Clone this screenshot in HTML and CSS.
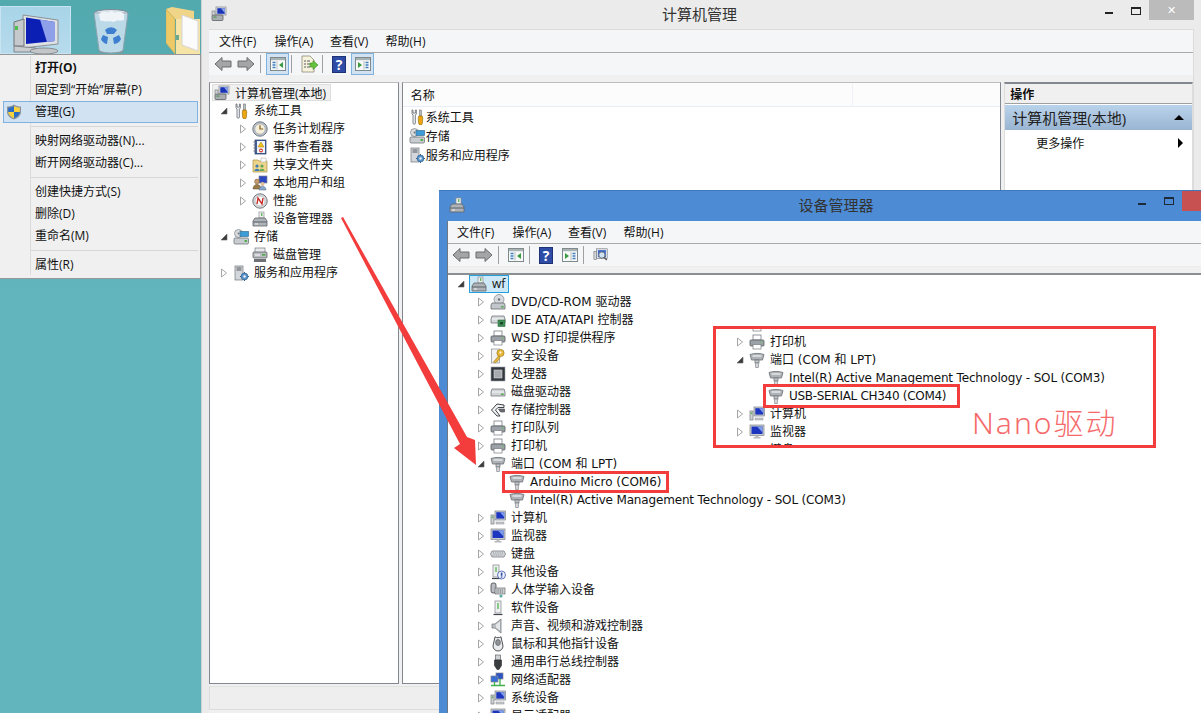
FILE: index.html
```html
<!DOCTYPE html>
<html>
<head>
  <title>计算机管理</title>
  <link rel="stylesheet" href="styles.css">
</head>
<body>
<svg class="defs" width="0" height="0">
  <defs>
    <symbol id="exp-closed" viewBox="0 0 8 10"><path d="M1.5 1 L6.5 5 L1.5 9 Z" fill="#fff" stroke="#a6a6a6"/></symbol>
    <symbol id="exp-open" viewBox="0 0 8 10"><path d="M7 2 V8 H1 Z" fill="#3c3c3c" stroke="#666" stroke-width=".6"/></symbol>

    <symbol id="i-mgmt" viewBox="0 0 16 16"><rect x="5" y="1" width="10" height="8" fill="#dfe3e8" stroke="#8b8f95" stroke-width=".8"/><rect x="6.3" y="2.2" width="7.6" height="5.6" fill="#1a34b8"/><path d="M10 2.2h3.9v5z" fill="#8fa8ea"/><rect x="1" y="9" width="11" height="5.5" rx="1" fill="#a9adb2" stroke="#5d6268" stroke-width=".8"/><rect x="2.5" y="10.5" width="3" height="1.2" fill="#4c9a4c"/><rect x="1" y="5" width="3" height="4" fill="#cfd3d6" stroke="#777" stroke-width=".6"/></symbol>
    <symbol id="i-tools" viewBox="0 0 16 16"><path d="M3 1 v4 l1 1 v8 a1.2 1.2 0 0 0 2.4 0 v-8 l1-1 v-4 l-1 0 v3 h-2.4 v-3 z" fill="#eceff2" stroke="#686d73" stroke-width=".8"/><rect x="10.6" y="1" width="1.8" height="6" fill="#b9bdc2" stroke="#5e6267" stroke-width=".5"/><path d="M9.8 7 h3.4 l.6 2 -.4 5 a1.4 1.4 0 0 1 -3.8 0 l-.4-5z" fill="#eba70e" stroke="#93660b" stroke-width=".6"/></symbol>
    <symbol id="i-clock" viewBox="0 0 16 16"><circle cx="8" cy="8" r="7.2" fill="#bcc3cc" stroke="#6f7882"/><circle cx="8" cy="8" r="5.2" fill="#f4f0dc" stroke="#98a0a8" stroke-width=".6"/><path d="M8 4.2 V8 H11.2" fill="none" stroke="#8a5a1c" stroke-width="1.2"/></symbol>
    <symbol id="i-event" viewBox="0 0 16 16"><rect x="3" y="1" width="11" height="14" fill="#3f5c9c" stroke="#2b3f70" stroke-width=".7"/><rect x="5" y="2" width="8" height="12" fill="#f2f3f5"/><path d="M1.5 3h3M1.5 6h3M1.5 9h3M1.5 12h3" stroke="#6a6f75"/><path d="M9 3 L12 8 H6z" fill="#f3c31c" stroke="#a27f0c" stroke-width=".5"/><circle cx="9" cy="11.5" r="2" fill="#d2433c"/><rect x="8" y="11" width="2" height="1" fill="#fff"/></symbol>
    <symbol id="i-share" viewBox="0 0 16 16"><path d="M1 3h5l1 1h8v11H1z" fill="#ecd48a" stroke="#a98f45" stroke-width=".7"/><rect x="9" y="1" width="5" height="4" fill="#fafafa" stroke="#aaa" stroke-width=".5"/><circle cx="5" cy="9" r="1.6" fill="#3b7db4"/><path d="M2.5 14c0-3 5-3 5 0z" fill="#3b7db4"/><circle cx="10" cy="9" r="1.6" fill="#5fa85a"/><path d="M7.5 14c0-3 5-3 5 0z" fill="#5fa85a"/></symbol>
    <symbol id="i-users" viewBox="0 0 16 16"><rect x="7" y="1" width="8" height="7" fill="#2c49c2" stroke="#80858c" stroke-width=".7"/><circle cx="5" cy="6.5" r="2.4" fill="#c69a6c" stroke="#7b5c3a" stroke-width=".5"/><path d="M1 14c0-6 8-6 8 0z" fill="#9a7b46" stroke="#5d4a28" stroke-width=".5"/><circle cx="10.5" cy="9" r="2" fill="#e0c09a"/><path d="M7 15c0-5 7-5 7 0z" fill="#8aa7c9" stroke="#55708f" stroke-width=".5"/></symbol>
    <symbol id="i-perf" viewBox="0 0 16 16"><circle cx="8" cy="8" r="7.2" fill="#d8dadc" stroke="#73777c"/><circle cx="8" cy="8" r="5" fill="#fbfbf7" stroke="#a4a8ac" stroke-width=".6"/><path d="M5 11 L6 5 L10 11 L11 5" fill="none" stroke="#c92c2c" stroke-width="1.4"/></symbol>
    <symbol id="i-dev" viewBox="0 0 16 16"><rect x="7" y="1" width="5" height="6" fill="#eef0ef" stroke="#8d9194" stroke-width=".7"/><rect x="9" y="2" width="1.4" height="3" fill="#66b866"/><path d="M3 7h10l2 3v5H1v-5z" fill="#aeb3b8" stroke="#60656b" stroke-width=".8"/><path d="M1 11h14" stroke="#5d6268"/><rect x="3" y="12.5" width="3" height="1" fill="#eee"/></symbol>
    <symbol id="i-storage" viewBox="0 0 16 16"><circle cx="5.5" cy="4.5" r="4" fill="#d9dcdf" stroke="#7d8287" stroke-width=".7"/><circle cx="5.5" cy="4.5" r="1" fill="#777"/><rect x="7" y="2.5" width="8.5" height="5" fill="#3d9bd6" stroke="#3c6f93" stroke-width=".7"/><rect x="1" y="9" width="14.5" height="6" rx="1.2" fill="#c9cdd1" stroke="#6e7378" stroke-width=".8"/><rect x="11.5" y="11" width="2.6" height="2" fill="#55b04f"/></symbol>
    <symbol id="i-disk" viewBox="0 0 16 16"><rect x="3" y="1" width="10" height="5" fill="#e8eaec" stroke="#75797e" stroke-width=".7"/><rect x="1" y="5" width="14" height="6" rx="1" fill="#b9bdc2" stroke="#5c6066" stroke-width=".8"/><rect x="10" y="7" width="3.4" height="1.6" fill="#4ea94b"/><rect x="2" y="12" width="12" height="3" fill="#6d7176"/><path d="M3 8h5" stroke="#fff"/></symbol>
    <symbol id="i-svc" viewBox="0 0 16 16"><rect x="2" y="1" width="8" height="14" fill="#d3d7dc" stroke="#70757b" stroke-width=".7"/><path d="M3.5 3h5M3.5 5h5" stroke="#55595e"/><circle cx="11.5" cy="11.5" r="3.4" fill="#5d94c8" stroke="#2e5f8e" stroke-width=".7"/><circle cx="11.5" cy="11.5" r="1.2" fill="#e6eef6"/><path d="M11.5 7v1.2M11.5 14.8v1.2M7 11.5h1.2M14.8 11.5H16" stroke="#2e5f8e"/></symbol>
    <symbol id="i-dvd" viewBox="0 0 16 16"><circle cx="9" cy="5.5" r="5" fill="#d8dbde" stroke="#7d8287" stroke-width=".7"/><circle cx="9" cy="5.5" r="1.2" fill="#6d7176"/><path d="M2 9h12l1 2v4H1v-4z" fill="#c3c7cb" stroke="#676b70" stroke-width=".8"/><rect x="11" y="12" width="2.6" height="1.5" fill="#4ea94b"/></symbol>
    <symbol id="i-ide" viewBox="0 0 16 16"><path d="M2 4h12l1 3v4H1V7z" fill="#d5d8db" stroke="#72777c" stroke-width=".8"/><path d="M2 7h12" stroke="#f7f7f7"/><rect x="8" y="8" width="7" height="6.5" fill="#3f8f56" stroke="#2c6a3e" stroke-width=".6"/><rect x="10" y="10" width="3" height="2.5" fill="#1e4a2c"/></symbol>
    <symbol id="i-printer" viewBox="0 0 16 16"><rect x="4" y="1" width="8" height="5" fill="#fff" stroke="#777c82" stroke-width=".8"/><rect x="1" y="6" width="14" height="6" rx="1" fill="#9da2a8" stroke="#565a5f" stroke-width=".8"/><rect x="4" y="10.5" width="8" height="4.5" fill="#fff" stroke="#777c82" stroke-width=".7"/><rect x="11.5" y="7.5" width="2" height="1" fill="#5ec25a"/></symbol>
    <symbol id="i-key" viewBox="0 0 16 16"><rect x="1.5" y="1" width="8" height="14" fill="#f1f2f3" stroke="#8a8e93" stroke-width=".7"/><circle cx="10.5" cy="5" r="3.6" fill="#eab93b" stroke="#9c7a1a" stroke-width=".7"/><circle cx="10.5" cy="4.5" r="1" fill="#fff"/><path d="M8.5 8 L3.5 14 L5 15 L6 13.6 L7 14 L10 9.5z" fill="#eab93b" stroke="#9c7a1a" stroke-width=".6"/></symbol>
    <symbol id="i-cpu" viewBox="0 0 16 16"><rect x="1" y="1" width="14" height="14" fill="#32383e" stroke="#9aa0a6" stroke-width=".6"/><rect x="4" y="4" width="8" height="8" fill="#a7abaf" stroke="#d8dadc" stroke-width=".6"/></symbol>
    <symbol id="i-hdd" viewBox="0 0 16 16"><path d="M2 5h12l1 3v4H1V8z" fill="#d1d4d7" stroke="#71767b" stroke-width=".8"/><path d="M2 8h12" stroke="#f5f5f5"/><rect x="11" y="9.5" width="2.6" height="1.5" fill="#4ea94b"/></symbol>
    <symbol id="i-stor" viewBox="0 0 16 16"><path d="M7 2 L1.5 8 L7 14 H10 L5.5 8 L8 5.5 H14 V3 Z" fill="#f0f1f2" stroke="#3f4347"/><path d="M8.5 7 h6 v3 h-4 z" fill="#6a6e73" stroke="#3f4347" stroke-width=".6"/></symbol>
    <symbol id="i-port" viewBox="0 0 16 16"><path d="M1 2.5 C5 1 11 1 15 2.5 L13.5 8 H2.5 Z" fill="#aeb2b6" stroke="#6b7075" stroke-width=".8"/><path d="M3.5 4h9" stroke="#e9ebec" stroke-width="1.4"/><rect x="6" y="8" width="4" height="3" fill="#c5c8cb" stroke="#6b7075" stroke-width=".7"/><rect x="6.7" y="11" width="2.6" height="4.5" fill="#d8dadc" stroke="#80848a" stroke-width=".7"/></symbol>
    <symbol id="i-pc" viewBox="0 0 16 16"><rect x="5" y="1" width="10.5" height="9" fill="#c9cdd1" stroke="#7f8388" stroke-width=".7"/><rect x="6.3" y="2.2" width="8" height="6.4" fill="#1c36c0"/><path d="M10 2.2h4.3v5z" fill="#7f9ce8"/><rect x="1" y="5" width="3" height="9" fill="#cfd3d6" stroke="#74787d" stroke-width=".7"/><rect x="1.8" y="6.5" width="1.4" height="1.6" fill="#57b04f"/><rect x="6" y="12" width="8" height="2" fill="#c9cdd1" stroke="#8a8e93" stroke-width=".5"/></symbol>
    <symbol id="i-mon" viewBox="0 0 16 16"><rect x="1" y="1" width="14" height="10.5" fill="#c9cdd1" stroke="#7f8388" stroke-width=".7"/><rect x="2.5" y="2.5" width="11" height="7.5" fill="#1c36c0"/><path d="M8 2.5h5.5v6z" fill="#7f9ce8"/><path d="M6.5 11.5h3v1.5h2v1.5h-7V13h2z" fill="#b6babe"/></symbol>
    <symbol id="i-kbd" viewBox="0 0 16 16"><path d="M2 5h12l1.5 3-1.5 3H2L.5 8z" fill="#d6d9dc" stroke="#777c81" stroke-width=".8"/><path d="M3 7h10M2.5 9h11" stroke="#8e9398" stroke-dasharray="1 .8"/></symbol>
    <symbol id="i-other" viewBox="0 0 16 16"><rect x="3" y="1" width="6" height="12" fill="#eef0f1" stroke="#7e8287" stroke-width=".7"/><rect x="5.2" y="3" width="1.6" height="5" fill="#6fc06a"/><path d="M2 14.5h9" stroke="#3f4347" stroke-width="1.2"/><circle cx="11.5" cy="11" r="4" fill="#eef2fa" stroke="#3c57a8" stroke-width=".8"/><rect x="10.8" y="8.6" width="1.6" height="3.2" fill="#2f4aa5"/><rect x="10.8" y="12.4" width="1.6" height="1.2" fill="#2f4aa5"/></symbol>
    <symbol id="i-hid" viewBox="0 0 16 16"><rect x="1" y="1" width="5" height="10" rx="2" fill="#b9bdc1" stroke="#43474b" stroke-width=".8"/><rect x="5" y="6" width="10" height="6" fill="#ced1d4" stroke="#666a6f" stroke-width=".7"/><path d="M6.5 8h7M6.5 10h7" stroke="#5d6166" stroke-dasharray="1 .8"/><circle cx="11" cy="14" r="1.6" fill="#5ba9a0"/></symbol>
    <symbol id="i-soft" viewBox="0 0 16 16"><rect x="5" y="1" width="6" height="12" fill="#eef0f1" stroke="#7e8287" stroke-width=".7"/><rect x="7.2" y="3" width="1.6" height="6" fill="#6fc06a"/><path d="M3.5 14.5h9" stroke="#3f4347" stroke-width="1.2"/></symbol>
    <symbol id="i-sound" viewBox="0 0 16 16"><path d="M2 6h3l6-5v14l-6-5H2z" fill="#bcc0c4" stroke="#777b80" stroke-width=".8"/><path d="M6 6.5l4-3v9l-4-3z" fill="#e5e7e8"/></symbol>
    <symbol id="i-mouse" viewBox="0 0 16 16"><path d="M5 .8 C7 2 9 2 11 .8 L13 10 A5 5 0 0 1 3 10Z" fill="#e9ebed" stroke="#3e4246" stroke-width=".9"/><ellipse cx="8" cy="6.5" rx="2.4" ry="3" fill="#8f9397" stroke="#4e5256" stroke-width=".6"/></symbol>
    <symbol id="i-usb" viewBox="0 0 16 16"><rect x="5.5" y="1" width="5" height="5" fill="#cfd2d5" stroke="#65696e" stroke-width=".7"/><path d="M4.5 6h7v5.5L9 15.5H7L4.5 11.5z" fill="#3a3d40" stroke="#2b2d30" stroke-width=".6"/></symbol>
    <symbol id="i-net" viewBox="0 0 16 16"><rect x="6" y="1" width="7" height="6" fill="#2c52c8" stroke="#7f8388" stroke-width=".7"/><rect x="1" y="4" width="7" height="6" fill="#3b6fd8" stroke="#7f8388" stroke-width=".7"/><path d="M4.5 10v3M1 13.5h14M10 7v6.5" stroke="#3fb04a" stroke-width="1.3"/></symbol>

    <symbol id="t-back" viewBox="0 0 18 16"><path d="M1 8 L8 1.5 V5 H17 V11 H8 V14.5Z" fill="#a3a5a7" stroke="#6b6d70"/></symbol>
    <symbol id="t-fwd" viewBox="0 0 18 16"><path d="M17 8 L10 1.5 V5 H1 V11 H10 V14.5Z" fill="#a3a5a7" stroke="#6b6d70"/></symbol>
    <symbol id="t-left" viewBox="0 0 16 16"><rect x=".5" y="1.5" width="15" height="13" fill="#f7f8f8" stroke="#7f8a8c"/><rect x="1" y="2" width="14" height="2.2" fill="#a8b2b5"/><path d="M2.5 6.5h3M2.5 9h3M2.5 11.5h3" stroke="#3f7fbf" stroke-width="1.3"/><path d="M7 5v8.5" stroke="#b9c0c2"/><path d="M13 6 L9 9 L13 12Z" fill="#3c9a40"/></symbol>
    <symbol id="t-right" viewBox="0 0 16 16"><rect x=".5" y="1.5" width="15" height="13" fill="#f7f8f8" stroke="#7f8a8c"/><rect x="1" y="2" width="14" height="2.2" fill="#a8b2b5"/><path d="M10.5 6.5h3M10.5 9h3M10.5 11.5h3" stroke="#3f7fbf" stroke-width="1.3"/><path d="M9 5v8.5" stroke="#b9c0c2"/><path d="M3 6 L7 9 L3 12Z" fill="#3c9a40"/></symbol>
    <symbol id="t-export" viewBox="0 0 18 18"><path d="M2 1h8l4 4v12H2z" fill="#f7f2dc" stroke="#8e8c7a" stroke-width=".8"/><path d="M4 6h2M7 6h3M4 9h2M7 9h3M4 12h2M7 12h3" stroke="#5a5f64"/><path d="M10 8h3V5.5L18 10l-5 4.500V12h-3z" fill="#64c23c" stroke="#3e8a22" stroke-width=".6"/></symbol>
    <symbol id="t-scan" viewBox="0 0 18 16"><rect x="4" y="1" width="12" height="11" fill="#e8ebee" stroke="#7e8388" stroke-width=".8"/><rect x="5.500" y="2.500" width="9" height="8" fill="#3c68c8"/><rect x="1" y="4" width="3" height="9" fill="#d2d5d8" stroke="#777b80" stroke-width=".7"/><circle cx="10" cy="8" r="3.500" fill="#cfe3f3" stroke="#6c7278"/><path d="M12.500 10.500l3 3" stroke="#555" stroke-width="1.600"/></symbol>

    <symbol id="d-pc" viewBox="0 0 60 46"><path d="M23 7 L58 12 V36 L23 40Z" fill="#dfe2e4" stroke="#8c9195"/><path d="M26 9.500 L55 14 V33 L26 36Z" fill="#0c1fb4"/><path d="M40 11.500 L55 14 V33 L47 34Z" fill="#8fa0ea"/><path d="M14 14 L24 11 V38 L14 38Z" fill="#c5c9cc" stroke="#6f7478"/><rect x="15" y="18" width="3" height="4" fill="#4fc04c"/><path d="M14 38 L36 40 V44 H14Z" fill="#c9cdd0" stroke="#81858a"/><ellipse cx="44" cy="43" rx="14" ry="3" fill="#c2c6c9" stroke="#888c90"/></symbol>
    <symbol id="d-bin" viewBox="0 0 38 46"><ellipse cx="19" cy="5" rx="17" ry="3.500" fill="#d9e4ec" stroke="#7b8a92"/><path d="M2 5 L7 42 A12 3 0 0 0 31 42 L36 5Z" fill="#cfe2f1" fill-opacity=".85" stroke="#8fa3b0"/><path d="M7 6c4-4 8 0 12-3 5 3 9-1 13 3v6c-4 2-6-1-10 2-5-2-9 1-14-2z" fill="#eff4f8"/><path d="M13 22 a8 8 0 0 1 12 0 l-3 4 h-7z M11 27 l5 2 -1 7 a8 8 0 0 1 -6 -5z M27 27 l2 4 a8 8 0 0 1 -7 5 l-1-6z" fill="#3f7fcf"/><path d="M7 42 A12 3 0 0 0 31 42 L30.500 45 H7.500Z" fill="#8f979c"/></symbol>
    <symbol id="d-folder" viewBox="0 0 34 47"><path d="M0 2 L9 12 H28 V4 L6 0Z" fill="#f0d488"/><rect x="10" y="12" width="24" height="38" fill="#f6e3a6"/><path d="M16 8 L32 14 V44 L16 38Z" fill="#fbfbfb" stroke="#d5d5d5"/><path d="M0 2 L9 12 V47 L0 36Z" fill="#eec968" stroke="#cfa84a" stroke-width=".5"/><rect x="10" y="28" width="3" height="5" fill="#6ca68f"/></symbol>
    <symbol id="shield" viewBox="0 0 16 16"><path d="M8 .5 C10 2 12.500 2.500 15 2.500 V8 C15 12 11 14.500 8 15.500 C5 14.500 1 12 1 8 V2.500 C3.500 2.500 6 2 8 .5Z" fill="#8c939a"/><path d="M8 2 V8 H2.200 V3.500 C4.500 3.500 6.500 3 8 2Z" fill="#2b6cc4"/><path d="M8 2 C9.500 3 11.500 3.500 13.800 3.500 V8 H8Z" fill="#f7d23c"/><path d="M2.200 8 H8 V14.200 C5.500 13.200 2.500 11 2.200 8Z" fill="#f7d23c"/><path d="M8 8 H13.800 C13.500 11 10.500 13.200 8 14.200Z" fill="#2b6cc4"/></symbol>
  </defs>
</svg>

<div class="desktop">
  <div class="desk-icons">
    <div class="desk-tile"><svg class="d-pc"><use href="#d-pc"/></svg></div>
    <svg class="d-bin"><use href="#d-bin"/></svg>
    <svg class="d-folder"><use href="#d-folder"/></svg>
  </div>

  <div class="ctx-menu">
    <div class="ctx-item bold"><span>打开(O)</span></div>
    <div class="ctx-item"><span>固定到“开始”屏幕(P)</span></div>
    <div class="ctx-item hot"><svg class="shield"><use href="#shield"/></svg><span>管理(G)</span></div>
    <div class="ctx-sep"></div>
    <div class="ctx-item"><span>映射网络驱动器(N)...</span></div>
    <div class="ctx-item"><span>断开网络驱动器(C)...</span></div>
    <div class="ctx-sep"></div>
    <div class="ctx-item"><span>创建快捷方式(S)</span></div>
    <div class="ctx-item"><span>删除(D)</span></div>
    <div class="ctx-item"><span>重命名(M)</span></div>
    <div class="ctx-sep"></div>
    <div class="ctx-item"><span>属性(R)</span></div>
  </div>

  <!-- computer management -->
  <div class="window win-main">
    <div class="titlebar">
      <svg class="ico title-ico"><use href="#i-mgmt"/></svg>
      <div class="title-text">计算机管理</div>
      <div class="win-btns">
        <span class="btn-min"></span>
        <span class="btn-max"></span>
        <span class="btn-close">✕</span>
      </div>
    </div>
    <div class="client">
      <div class="menubar"><span>文件(F)</span><span>操作(A)</span><span>查看(V)</span><span>帮助(H)</span></div>
      <div class="toolbar">
        <svg class="t-arrow"><use href="#t-back"/></svg>
        <svg class="t-arrow"><use href="#t-fwd"/></svg>
        <i class="t-sep"></i>
        <span class="t-btn on"><svg class="ico"><use href="#t-left"/></svg></span>
        <i class="t-sep"></i>
        <span class="t-btn"><svg class="t-big"><use href="#t-export"/></svg></span>
        <i class="t-sep"></i>
        <span class="t-help">?</span>
        <span class="t-btn on"><svg class="ico"><use href="#t-right"/></svg></span>
      </div>
      <div class="panes">
        <div class="pane pane-tree">
          <div class="root-row"><svg class="ico"><use href="#i-mgmt"/></svg><span>计算机管理(本地)</span></div>
          <div class="row l1"><svg class="exp"><use href="#exp-open"/></svg><svg class="ico"><use href="#i-tools"/></svg>系统工具</div>
          <div class="row l2"><svg class="exp"><use href="#exp-closed"/></svg><svg class="ico"><use href="#i-clock"/></svg>任务计划程序</div>
          <div class="row l2"><svg class="exp"><use href="#exp-closed"/></svg><svg class="ico"><use href="#i-event"/></svg>事件查看器</div>
          <div class="row l2"><svg class="exp"><use href="#exp-closed"/></svg><svg class="ico"><use href="#i-share"/></svg>共享文件夹</div>
          <div class="row l2"><svg class="exp"><use href="#exp-closed"/></svg><svg class="ico"><use href="#i-users"/></svg>本地用户和组</div>
          <div class="row l2"><svg class="exp"><use href="#exp-closed"/></svg><svg class="ico"><use href="#i-perf"/></svg>性能</div>
          <div class="row l2"><i class="exp"></i><svg class="ico"><use href="#i-dev"/></svg>设备管理器</div>
          <div class="row l1"><svg class="exp"><use href="#exp-open"/></svg><svg class="ico"><use href="#i-storage"/></svg>存储</div>
          <div class="row l2"><i class="exp"></i><svg class="ico"><use href="#i-disk"/></svg>磁盘管理</div>
          <div class="row l1"><svg class="exp"><use href="#exp-closed"/></svg><svg class="ico"><use href="#i-svc"/></svg>服务和应用程序</div>
        </div>
        <div class="pane pane-list">
          <div class="list-head"><span class="col-name">名称</span></div>
          <div class="list-row"><svg class="ico"><use href="#i-tools"/></svg>系统工具</div>
          <div class="list-row"><svg class="ico"><use href="#i-storage"/></svg>存储</div>
          <div class="list-row"><svg class="ico"><use href="#i-svc"/></svg>服务和应用程序</div>
        </div>
        <div class="pane pane-actions">
          <div class="act-head">操作</div>
          <div class="act-group"><span>计算机管理(本地)</span><i class="tri-up"></i></div>
          <div class="act-item"><span>更多操作</span><i class="tri-right"></i></div>
        </div>
      </div>
      <div class="statusbar"></div>
    </div>
  </div>

  <!-- device manager -->
  <div class="window win-dev">
    <div class="titlebar">
      <svg class="ico title-ico"><use href="#i-dev"/></svg>
      <div class="title-text">设备管理器</div>
      <div class="win-btns">
        <span class="btn-min"></span>
        <span class="btn-max"></span>
        <span class="btn-close"></span>
      </div>
    </div>
    <div class="client">
      <div class="menubar"><span>文件(F)</span><span>操作(A)</span><span>查看(V)</span><span>帮助(H)</span></div>
      <div class="toolbar">
        <svg class="t-arrow"><use href="#t-back"/></svg>
        <svg class="t-arrow"><use href="#t-fwd"/></svg>
        <i class="t-sep"></i>
        <span class="t-btn"><svg class="ico"><use href="#t-left"/></svg></span>
        <i class="t-sep"></i>
        <span class="t-help">?</span>
        <span class="t-btn"><svg class="ico"><use href="#t-right"/></svg></span>
        <i class="t-sep"></i>
        <span class="t-btn"><svg class="ico"><use href="#t-scan"/></svg></span>
      </div>
      <div class="dev-tree">
        <div class="row d0"><svg class="exp"><use href="#exp-open"/></svg><span class="host"><svg class="ico"><use href="#i-dev"/></svg>wf</span></div>
        <div class="row d1 lat"><svg class="exp"><use href="#exp-closed"/></svg><svg class="ico"><use href="#i-dvd"/></svg>DVD/CD-ROM 驱动器</div>
        <div class="row d1 lat"><svg class="exp"><use href="#exp-closed"/></svg><svg class="ico"><use href="#i-ide"/></svg>IDE ATA/ATAPI 控制器</div>
        <div class="row d1 lat"><svg class="exp"><use href="#exp-closed"/></svg><svg class="ico"><use href="#i-printer"/></svg>WSD 打印提供程序</div>
        <div class="row d1"><svg class="exp"><use href="#exp-closed"/></svg><svg class="ico"><use href="#i-key"/></svg>安全设备</div>
        <div class="row d1"><svg class="exp"><use href="#exp-closed"/></svg><svg class="ico"><use href="#i-cpu"/></svg>处理器</div>
        <div class="row d1"><svg class="exp"><use href="#exp-closed"/></svg><svg class="ico"><use href="#i-hdd"/></svg>磁盘驱动器</div>
        <div class="row d1"><svg class="exp"><use href="#exp-closed"/></svg><svg class="ico"><use href="#i-stor"/></svg>存储控制器</div>
        <div class="row d1"><svg class="exp"><use href="#exp-closed"/></svg><svg class="ico"><use href="#i-printer"/></svg>打印队列</div>
        <div class="row d1"><svg class="exp"><use href="#exp-closed"/></svg><svg class="ico"><use href="#i-printer"/></svg>打印机</div>
        <div class="row d1 lat"><svg class="exp"><use href="#exp-open"/></svg><svg class="ico"><use href="#i-port"/></svg>端口 (COM 和 LPT)</div>
        <div class="row d2 lat"><i class="exp"></i><svg class="ico"><use href="#i-port"/></svg>Arduino Micro (COM6)</div>
        <div class="row d2 lat tight"><i class="exp"></i><svg class="ico"><use href="#i-port"/></svg>Intel(R) Active Management Technology - SOL (COM3)</div>
        <div class="row d1"><svg class="exp"><use href="#exp-closed"/></svg><svg class="ico"><use href="#i-pc"/></svg>计算机</div>
        <div class="row d1"><svg class="exp"><use href="#exp-closed"/></svg><svg class="ico"><use href="#i-mon"/></svg>监视器</div>
        <div class="row d1"><svg class="exp"><use href="#exp-closed"/></svg><svg class="ico"><use href="#i-kbd"/></svg>键盘</div>
        <div class="row d1"><svg class="exp"><use href="#exp-closed"/></svg><svg class="ico"><use href="#i-other"/></svg>其他设备</div>
        <div class="row d1"><svg class="exp"><use href="#exp-closed"/></svg><svg class="ico"><use href="#i-hid"/></svg>人体学输入设备</div>
        <div class="row d1"><svg class="exp"><use href="#exp-closed"/></svg><svg class="ico"><use href="#i-soft"/></svg>软件设备</div>
        <div class="row d1"><svg class="exp"><use href="#exp-closed"/></svg><svg class="ico"><use href="#i-sound"/></svg>声音、视频和游戏控制器</div>
        <div class="row d1"><svg class="exp"><use href="#exp-closed"/></svg><svg class="ico"><use href="#i-mouse"/></svg>鼠标和其他指针设备</div>
        <div class="row d1"><svg class="exp"><use href="#exp-closed"/></svg><svg class="ico"><use href="#i-usb"/></svg>通用串行总线控制器</div>
        <div class="row d1"><svg class="exp"><use href="#exp-closed"/></svg><svg class="ico"><use href="#i-net"/></svg>网络适配器</div>
        <div class="row d1"><svg class="exp"><use href="#exp-closed"/></svg><svg class="ico"><use href="#i-pc"/></svg>系统设备</div>
        <div class="row d1"><svg class="exp"><use href="#exp-closed"/></svg><svg class="ico"><use href="#i-mon"/></svg>显示适配器</div>
      </div>
    </div>
  </div>

  <!-- red annotations drawn over the screenshot -->
  <div class="mark mark-arduino"></div>
  <div class="nano-box">
    <div class="nano-tree">
      <div class="row n1"><svg class="exp"><use href="#exp-closed"/></svg><svg class="ico"><use href="#i-printer"/></svg>打印队列</div>
      <div class="row n1"><svg class="exp"><use href="#exp-closed"/></svg><svg class="ico"><use href="#i-printer"/></svg>打印机</div>
      <div class="row n1 lat"><svg class="exp"><use href="#exp-open"/></svg><svg class="ico"><use href="#i-port"/></svg>端口 (COM 和 LPT)</div>
      <div class="row n2 lat tight"><i class="exp"></i><svg class="ico"><use href="#i-port"/></svg>Intel(R) Active Management Technology - SOL (COM3)</div>
      <div class="row n2 lat tighter"><i class="exp"></i><svg class="ico"><use href="#i-port"/></svg>USB-SERIAL CH340 (COM4)</div>
      <div class="row n1"><svg class="exp"><use href="#exp-closed"/></svg><svg class="ico"><use href="#i-pc"/></svg>计算机</div>
      <div class="row n1"><svg class="exp"><use href="#exp-closed"/></svg><svg class="ico"><use href="#i-mon"/></svg>监视器</div>
      <div class="row n1"><svg class="exp"><use href="#exp-closed"/></svg><svg class="ico"><use href="#i-kbd"/></svg>键盘</div>
    </div>
    <div class="mark mark-usb"></div>
    <div class="nano-label">Nano驱动</div>
  </div>
  <svg class="arrow" width="1201" height="713"><polygon points="341,218 343,217 467,437 475,440 476,465 454,448 460,444" fill="#f33c3c"/></svg>
</div>
</body>
</html>
```

FILE: styles.css
```css
html, body {
    margin: 0;
    padding: 0;
    height: 100%;
    overflow: hidden;
}

body {
    font-family: "Open Sans", "Noto Sans CJK SC", sans-serif;
    font-size: 12px;
    color: #111;
}

.defs {
    position: absolute;
}

.desktop {
    position: relative;
    width: 1201px;
    height: 713px;
    overflow: hidden;
    background: linear-gradient(#52a9ae, #62b5bd 300px);
}

/* desktop icons */

.desk-icons {
    display: flex;
    padding-top: 6px;
    height: 48px;
}

.desk-tile {
    width: 71px;
    height: 48px;
    background: linear-gradient(#a8d4e8, #b7dbec);
    box-shadow: inset 0 0 0 1px #c8e4f1;
    display: flex;
    align-items: flex-end;
}

.d-pc {
    width: 60px;
    height: 46px;
}

.d-bin {
    width: 38px;
    height: 46px;
    margin: 2px 0 0 21px;
}

.d-folder {
    width: 34px;
    height: 47px;
    margin: 1px 0 0 36px;
}

/* context menu */

.ctx-menu {
    position: absolute;
    left: 0;
    top: 54px;
    z-index: 2;
    width: 201px;
    height: 225px;
    box-sizing: border-box;
    padding-top: 2px;
    background: #f0f0f0;
    border: 1px solid #979797;
    border-left: none;
    background-image: linear-gradient(#dcdcdc, #dcdcdc);
    background-size: 1px 219px;
    background-position: 30px 1px;
    background-repeat: no-repeat;
}

.ctx-item {
    position: relative;
    height: 22px;
    line-height: 22px;
    margin: 0 2px 0 3px;
    padding-left: 32px;
}

.ctx-item.bold {
    font-weight: 700;
}

.ctx-item.hot {
    background: #d1e2f2;
    box-shadow: inset 0 0 0 1px #7fb2e0;
}

.shield {
    position: absolute;
    left: 3px;
    top: 3px;
    width: 16px;
    height: 16px;
}

.ctx-sep {
    height: 7px;
    margin-left: 31px;
    margin-right: 2px;
    background: linear-gradient(#d7d7d7, #d7d7d7) 0 3px / 100% 1px no-repeat;
}

/* windows */

.window {
    position: absolute;
    box-sizing: border-box;
}

.win-main {
    left: 201px;
    top: 0;
    width: 1000px;
    height: 713px;
    background: #ebebeb;
    border-left: 1px solid #cfd2d3;
}

.win-dev {
    left: 439px;
    top: 190px;
    width: 762px;
    height: 523px;
    background: #4d8bd4;
    border-top: 1px solid #3f78bd;
    z-index: 1;
}

.titlebar {
    position: relative;
    display: flex;
    align-items: center;
    justify-content: center;
    height: 29px;
}

.title-text {
    font-size: 15px;
    color: #333;
    margin: 0 4px 2px 0;
}

.title-ico {
    position: absolute;
    left: 9px;
    top: 6px;
}

.win-btns {
    position: absolute;
    top: 0;
    right: 7px;
    display: flex;
    align-items: flex-start;
}

.btn-min {
    width: 8px;
    height: 2px;
    margin: 12px 18px 0 0;
    background: #222;
}

.btn-max {
    box-sizing: border-box;
    width: 10px;
    height: 8px;
    margin: 7px 8px 0 0;
    border: 1px solid #222;
    border-top-width: 2px;
}

.btn-close {
    width: 45px;
    height: 20px;
    line-height: 20px;
    text-align: center;
    font-size: 11px;
    color: #fff;
    background: #bbb;
}

.client {
    margin-left: 7px;
    margin-right: 7px;
    height: 684px;
    display: flex;
    flex-direction: column;
    background: #f0f0f0;
    border-top: 1px solid #dcdcdc;
    border-right: 1px solid #dcdcdc;
}

.menubar {
    display: flex;
    gap: 18.5px;
    height: 22px;
    align-items: center;
    padding-left: 10px;
    background: #f5f6f8;
    border-bottom: 1px solid #aaa;
    flex: none;
}

.menubar span {
    width: 37px;
    white-space: nowrap;
}

.toolbar {
    display: flex;
    align-items: center;
    height: 22px;
    padding-left: 5px;
    background: #f5f6f8;
    flex: none;
}

.t-arrow {
    width: 18px;
    height: 16px;
    margin-right: 5px;
}

.t-sep {
    width: 1px;
    height: 18px;
    margin-right: 5px;
    background: #a0a0a0;
}

.t-btn {
    display: flex;
    align-items: center;
    justify-content: center;
    box-sizing: border-box;
    width: 23px;
    height: 22px;
    margin-right: 2px;
}

.t-btn.on {
    background: #d1e2f2;
    border: 1px solid #7fb2e0;
}

.t-btn .ico {
    margin-right: 0;
}

.t-big {
    width: 18px;
    height: 18px;
}

.t-help {
    width: 14px;
    height: 17px;
    line-height: 15px;
    margin: 0 5px 0 4px;
    text-align: center;
    font-weight: 700;
    font-size: 14px;
    color: #fff;
    background: #2e4ca6;
    border: 1px solid #1d3274;
    box-sizing: border-box;
}

.ico {
    width: 16px;
    height: 16px;
    flex: none;
    margin-right: 5px;
}

.exp {
    display: block;
    width: 8px;
    height: 10px;
    flex: none;
    margin-right: 5px;
}

.row {
    display: flex;
    align-items: center;
    height: 18px;
    line-height: 18px;
    white-space: nowrap;
}

.lat {
    font-family: "DejaVu Sans", "Noto Sans CJK SC", sans-serif;
}

.tight {
    letter-spacing: -.16px;
}

.tighter {
    letter-spacing: -.3px;
}

/* main window panes */

.panes {
    display: flex;
    gap: 3px;
    height: 602px;
    margin-top: 7px;
    flex: none;
}

.pane {
    box-sizing: border-box;
    background: #fff;
    border: 1px solid #828790;
    border-top-color: #bdbdbd;
}

.pane-tree {
    width: 190px;
    padding: 1px 0 0 2px;
}

.root-row {
    display: flex;
    align-items: center;
    width: 119px;
    height: 17px;
    margin-bottom: 1px;
    box-sizing: border-box;
    padding-left: 1px;
    background: #f0f0f0;
    border: 1px solid #dedede;
    white-space: nowrap;
}

.l1 {
    padding-left: 8px;
}

.l2 {
    padding-left: 27px;
}

.pane-list {
    width: 600px;
}

.list-head {
    display: flex;
    height: 23px;
    align-items: center;
    background: #fcfcfc;
    border-bottom: 1px solid #e6eef6;
}

.col-name {
    box-sizing: border-box;
    width: 450px;
    padding: 2px 0 0 8px;
    line-height: 21px;
    border-right: 1px solid #eef2f6;
}

.list-row {
    display: flex;
    align-items: center;
    height: 19px;
    padding-left: 6px;
}

.list-row .ico {
    margin-right: 1px;
}

.pane-actions {
    width: 189px;
    border: 1px solid #ddd;
    border-top: 2px solid #828790;
}

.act-head {
    height: 19px;
    line-height: 21px;
    padding-left: 5px;
    font-weight: 700;
    background: #f0f0f0;
    border-bottom: 1px solid #a0a0a0;
}

.act-group {
    display: flex;
    align-items: center;
    justify-content: space-between;
    height: 25px;
    margin-top: 1px;
    padding: 0 8px 0 7px;
    font-size: 15px;
    color: #222;
    background: linear-gradient(#bad3ec, #9ab5d2);
}

.tri-up {
    width: 0;
    height: 0;
    border-left: 5px solid transparent;
    border-right: 5px solid transparent;
    border-bottom: 5px solid #000;
}

.act-item {
    display: flex;
    align-items: center;
    justify-content: space-between;
    height: 23px;
    padding: 1px 9px 0 31px;
}

.tri-right {
    width: 0;
    height: 0;
    border-top: 5px solid transparent;
    border-bottom: 5px solid transparent;
    border-left: 5px solid #000;
}

.statusbar {
    height: 22px;
    margin-top: 2px;
    background: #eee;
    border-top: 1px solid #e2e2e2;
    border-bottom: 1px solid #dcdcdc;
    border-left: 1px solid #dcdcdc;
}

/* device manager */

.win-dev .titlebar {
    height: 30px;
}

.win-dev .title-text {
    margin: 0 0 3px 32px;
}

.win-dev .title-ico {
    left: 10px;
}

.win-dev .win-btns {
    right: 0;
}

.win-dev .btn-min {
    background: #1e2a3a;
}

.win-dev .btn-max {
    margin: 6px 8px 0 0;
    border-color: #1e2a3a;
}

.win-dev .btn-close {
    width: 19px;
    background: #c75050;
}

.win-dev .client {
    margin: 0 0 0 8px;
    height: 492px;
    border-top: none;
    border-left: 1px solid #6f7780;
    border-right: none;
}

.win-dev .menubar {
    padding-left: 9px;
}

.win-dev .toolbar {
    padding-left: 4px;
    border-bottom: 1px solid #ececec;
}

.dev-tree {
    flex: 1;
    margin-top: 6px;
    background: #fff;
    border-top: 2px solid #8a8f94;
    overflow: hidden;
}

.d0 {
    padding-left: 9px;
}

.host {
    display: flex;
    align-items: center;
    box-sizing: border-box;
    width: 40px;
    height: 18px;
    padding-left: 1px;
    margin-left: -1px;
    background: #cde8f7;
    border: 1px solid #26a0da;
}

.d1 {
    padding-left: 29px;
}

.d2 {
    padding-left: 48px;
}

/* annotations */

.mark {
    position: absolute;
    z-index: 4;
    box-sizing: border-box;
    border: 3px solid #f33c3c;
}

.mark-arduino {
    left: 502px;
    top: 471px;
    width: 167px;
    height: 22px;
}

.nano-box {
    position: absolute;
    z-index: 3;
    left: 713px;
    top: 326px;
    width: 443px;
    height: 122px;
    box-sizing: border-box;
    overflow: hidden;
    background: #fff;
    border: 3px solid #f33c3c;
}

.nano-tree {
    margin-top: -14px;
}

.n1 {
    padding-left: 20px;
}

.n2 {
    padding-left: 39px;
}

.mark-usb {
    left: 47px;
    top: 55px;
    width: 197px;
    height: 24px;
}

.nano-label {
    position: absolute;
    left: 256px;
    top: 74px;
    font-size: 30px;
    line-height: 40px;
    letter-spacing: 2px;
    color: #f56a6a;
    font-family: "Noto Sans", "Noto Sans CJK SC", sans-serif;
    font-weight: 300;
}

.arrow {
    position: absolute;
    left: 0;
    top: 0;
    z-index: 5;
    pointer-events: none;
}
```
